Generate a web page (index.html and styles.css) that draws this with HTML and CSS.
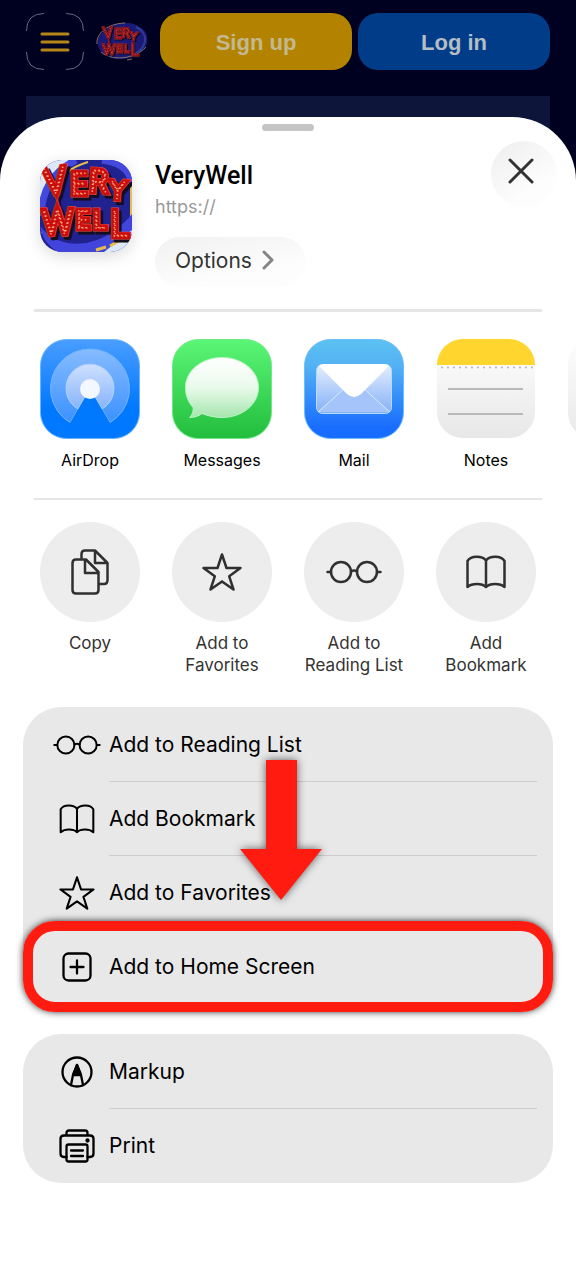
FILE: index.html
```html
<!doctype html>
<html lang="en">
<head>
<meta charset="UTF-8" />
<meta name="viewport" content="width=device-width, initial-scale=1" />
<title>VeryWell</title>
<link rel="stylesheet" href="styles.css">
</head>
<body>
	<!-- shared icons -->
	<svg class="defs" width="0" height="0" aria-hidden="true">
		<defs>
			<g id="letters" font-family="Inter, sans-serif" font-weight="100" text-anchor="middle">
				<text x="16" y="34" font-size="34" rotate="-6">V</text>
				<text x="39" y="34" font-size="28">E</text>
				<text x="58" y="31" font-size="29" rotate="3">R</text>
				<text x="77" y="38" font-size="23" rotate="4">Y</text>
				<text x="18" y="74" font-size="32" rotate="-2">W</text>
				<text x="43" y="68" font-size="23">E</text>
				<text x="60" y="68" font-size="23">L</text>
				<text x="80" y="76" font-size="34">L</text>
			</g>
			<g id="sign" stroke-linejoin="miter" fill="none">
				<use href="#letters" x="3" y="3" stroke="#130d20" stroke-width="7" />
				<use href="#letters" stroke="#e5523e" stroke-width="7" />
				<use href="#letters" stroke="#cb0c0c" stroke-width="6" />
				<use href="#letters" stroke="#ffb184" stroke-width="1.6" stroke-linecap="round" stroke-dasharray="0 4" />
			</g>
			<symbol id="glasses" viewBox="0 0 56 24">
				<circle cx="15" cy="12" r="10" />
				<circle cx="41" cy="12" r="10" />
				<path d="M25 11.500q3-1.800 6 0M1.500 12H5M51 12h3.500" />
			</symbol>
			<symbol id="book" viewBox="0 0 40 34">
				<path d="M20 5.500C16 .5 5 .5 1.500 6V32C6 28 16 28 20 32C24 28 34 28 38.500 32V6C35 .5 24 .5 20 5.500V32" />
			</symbol>
			<symbol id="star" viewBox="0 0 40 38">
				<path d="M20 1.500L24.500 15H38.500L27.200 23.300L31.500 36.500L20 28.400L8.500 36.500L12.800 23.300L1.500 15H15.500Z" />
			</symbol>
		</defs>
	</svg>

	<header class="topbar">
		<button class="menu" type="button" aria-label="Menu">
			<svg width="58" height="57" viewBox="0 0 58 57" fill="none">
				<path d="M.5 18Q.5.5 18 .5M40 .5Q57.500.5 57.500 18M57.500 39Q57.500 56.500 40 56.500M18 56.500Q.5 56.500.5 39" stroke="#66668a" />
				<path d="M16 21h26M16 29h26M16 37h26" stroke="#b58716" stroke-width="3" stroke-linecap="round" />
			</svg>
		</button>
		<a class="brand" href="#" aria-label="VeryWell">
			<svg width="52" height="40" viewBox="0 0 104 80">
				<ellipse cx="53" cy="38" rx="50" ry="36" fill="#23269a" transform="rotate(-9 53 38)" />
				<path d="M2 44C0 22 24 3 58 2M10 60C30 78 76 76 100 50M62 76l10-2" fill="none" stroke="#bda27f" stroke-width="2" />
				<path d="M80 10C108 24 102 52 74 66" fill="none" stroke="#4650c8" stroke-width="4" />
				<use href="#sign" transform="translate(12 4) scale(.82)" />
			</svg>
		</a>
		<a class="top-btn signup" href="#">Sign up</a>
		<a class="top-btn login" href="#">Log in</a>
	</header>

	<main class="stage">
		<section class="sheet">
			<div class="handle"></div>
			<div class="site">
				<svg class="site-icon" width="92" height="92" viewBox="0 0 92 92">
					<rect width="92" height="92" fill="#20228f" />
					<path d="M0 0H34C14 8 4 26 0 48Z" fill="#dce7f8" />
					<path d="M36 0C12 12 2 30 1 56M92 22C88 8 78 2 62 0" fill="none" stroke="#4448dc" stroke-width="7" />
					<path d="M48 2C28 8 18 18 12 30M91 26V66M2 72C20 92 62 96 92 64" fill="none" stroke="#e9bd4b" stroke-width="2" />
					<path d="M0 66C22 94 64 88 92 54V74L64 92H18C8 86 2 78 0 66Z" fill="#4145dc" />
					<path d="M64 92l28-22V92Z" fill="#dce7f8" />
					<path d="M56 90l10-3M70 86l14-8" stroke="#e9bd4b" stroke-width="3" />
					<use href="#sign" />
				</svg>
				<div class="site-text">
					<h1>VeryWell</h1>
					<p>https://</p>
					<button class="options" type="button">Options
						<svg width="12" height="20" viewBox="0 0 12 20"><path d="M2 2l8 8-8 8" /></svg>
					</button>
				</div>
				<button class="close" type="button" aria-label="Close">
					<svg width="26" height="26" viewBox="0 0 26 26"><path d="M2 2l22 22M24 2L2 24" /></svg>
				</button>
			</div>

			<nav class="apps">
				<a href="#">
					<svg width="100" height="100" viewBox="0 0 100 100">
						<defs>
							<linearGradient id="air" x2="0" y2="1"><stop stop-color="#4a9dff" /><stop offset=".7" stop-color="#0078ff" /></linearGradient>
							<linearGradient id="ring" x2="0" y2="1"><stop stop-color="#86bbff" /><stop offset="1" stop-color="#3b91ff" /></linearGradient>
							<linearGradient id="ring2" x2="0" y2="1"><stop stop-color="#cfe0ff" /><stop offset="1" stop-color="#85b4fb" /></linearGradient>
						</defs>
						<rect x=".5" y=".5" width="99" height="99" rx="26" fill="url(#air)" stroke="#68b5ff" />
						<path d="M30 83.500A39.500 39.500 0 1 1 70 83.500L50 50Z" fill="url(#ring)" stroke="#75b4ff" />
						<path d="M38 70A24 24 0 1 1 62 70L50 50Z" fill="url(#ring2)" stroke="#b5d3ff" />
						<path d="M50 50L29 86H71Z" fill="#0079ff" />
						<circle cx="50" cy="50" r="10" fill="#f3f7ff" />
					</svg>
					<span>AirDrop</span>
				</a>
				<a href="#">
					<svg width="100" height="100" viewBox="0 0 100 100">
						<defs>
							<linearGradient id="msg" x2="0" y2="1"><stop stop-color="#5bf675" /><stop offset="1" stop-color="#22bd3c" /></linearGradient>
							<linearGradient id="bubble" x2="0" y2="1"><stop stop-color="#fff" /><stop offset=".5" stop-color="#e9faeb" /><stop offset="1" stop-color="#a5e6ad" /></linearGradient>
						</defs>
						<rect x=".5" y=".5" width="99" height="99" rx="26" fill="url(#msg)" stroke="#70eb83" />
						<path d="M50 18.500C70 18.500 86.500 31.500 86.500 48.500S70 78.500 50 78.500C43 78.500 36 77 30 74.500C26 77.500 22 78.500 17.500 78.500C21 75 21.500 71 21 68.500C16 63 13.500 56 13.500 48.500C13.500 31.500 30 18.500 50 18.500Z" fill="url(#bubble)" stroke="#baf5c3" />
					</svg>
					<span>Messages</span>
				</a>
				<a href="#">
					<svg width="100" height="100" viewBox="0 0 100 100">
						<defs>
							<linearGradient id="mail" x2="0" y2="1"><stop stop-color="#5bc1f2" /><stop offset=".25" stop-color="#54b3f4" /><stop offset=".9" stop-color="#186cff" /></linearGradient>
							<linearGradient id="env" x2="0" y2="1"><stop stop-color="#e5eefe" /><stop offset="1" stop-color="#83b0f7" /></linearGradient>
						</defs>
						<rect x=".5" y=".5" width="99" height="99" rx="26" fill="url(#mail)" stroke="#6cbefa" />
						<rect x="12.500" y="25.500" width="75" height="49" rx="6" fill="url(#env)" stroke="#b5dcff" />
						<path d="M14 73L50 41L86 73" fill="#a5c5fa" stroke="#d9eaff" />
						<path d="M15 27Q17 25 20 25H80Q83 25 85 27L57 55Q50 61 43 55Z" fill="#fff" />
					</svg>
					<span>Mail</span>
				</a>
				<a href="#">
					<svg width="100" height="100" viewBox="0 0 100 100">
						<defs>
							<linearGradient id="paper" x2="0" y2="1"><stop stop-color="#fff" /><stop offset="1" stop-color="#e7e7e7" /></linearGradient>
							<clipPath id="tile"><rect x="1" y="0" width="98" height="99" rx="26" /></clipPath>
						</defs>
						<g clip-path="url(#tile)">
							<rect width="100" height="100" fill="url(#paper)" />
							<rect width="100" height="26" fill="#ffd52e" />
						</g>
						<path d="M6 28.500H97" stroke="#b5b3a8" stroke-width="2" stroke-linecap="round" stroke-dasharray="0 6" />
						<path d="M12 50H87M12 75H87" stroke="#b9b9b9" stroke-width="2" />
					</svg>
					<span>Notes</span>
				</a>
				<a class="more" href="#" aria-label="More apps"></a>
			</nav>

			<div class="actions">
				<button type="button">
					<span class="round"><svg width="38" height="46" viewBox="0 0 38 46"><path d="M10.500 9V5Q10.500 1.500 14 1.500H24L36.500 14V31Q36.500 35 33 35H28M24 1.500V14H36.500" /><path d="M5 10.500H15L27.500 23V41Q27.500 44.500 24 44.500H5Q1.500 44.500 1.500 41V14Q1.500 10.500 5 10.500ZM14 10.500V24H27.500" /></svg></span>
					Copy
				</button>
				<button type="button">
					<span class="round"><svg width="40" height="38"><use href="#star" /></svg></span>
					Add to<br>Favorites
				</button>
				<button type="button">
					<span class="round"><svg width="56" height="24"><use href="#glasses" /></svg></span>
					Add to<br>Reading List
				</button>
				<button type="button">
					<span class="round"><svg width="40" height="34"><use href="#book" /></svg></span>
					Add<br>Bookmark
				</button>
			</div>

			<div class="list">
				<button class="row" type="button"><span class="row-icon"><svg width="48" height="22"><use href="#glasses" /></svg></span><span class="row-label">Add to Reading List</span></button>
				<button class="row" type="button"><span class="row-icon"><svg width="36" height="30"><use href="#book" /></svg></span><span class="row-label">Add Bookmark</span></button>
				<button class="row plain" type="button"><span class="row-icon"><svg width="36" height="34"><use href="#star" /></svg></span><span class="row-label">Add to Favorites</span></button>
				<button class="row plain target" type="button"><span class="row-icon"><svg width="30" height="30" viewBox="0 0 30 30"><rect x="1.500" y="1.500" width="27" height="27" rx="5" /><path d="M8.500 15h13M15 8.500v13" /></svg></span><span class="row-label">Add to Home Screen</span></button>
				<svg class="arrow" width="82" height="140" viewBox="0 0 82 140" aria-hidden="true"><path d="M26 0H57V89H82L41 140L0 89H26Z" /></svg>
			</div>

			<div class="list">
				<button class="row" type="button"><span class="row-icon"><svg width="32" height="32" viewBox="0 0 32 32"><circle cx="16" cy="16" r="14.500" /><path d="M10 29L12 19H20L22 29M12 19L16 9L20 19" /><path class="solid" d="M16 9L12.500 18H19.500Z" /></svg></span><span class="row-label">Markup</span></button>
				<button class="row plain" type="button"><span class="row-icon"><svg width="36" height="34" viewBox="0 0 36 34"><path d="M7.500 28H5Q1.500 28 1.500 24.500V10Q1.500 6.500 5 6.500H31Q34.500 6.500 34.500 10V24.500Q34.500 28 31 28H28.500M7.500 6V4Q7.500 1.500 10 1.500H26Q28.500 1.500 28.500 4V6" /><rect x="7.500" y="15.500" width="21" height="17" rx="2" /><path d="M12 21.500h12M12 27h12" /><circle class="solid" cx="28.500" cy="11.500" r="1" /></svg></span><span class="row-label">Print</span></button>
			</div>
		</section>
	</main>
</body>
</html>
```
FILE: styles.css
```css
*{
	box-sizing:border-box;
}
html, body, h1, p, button{
	margin:0;
	padding:0;
}
body{
	display:flex;
	flex-direction:column;
	min-height:100vh;
	background:#000020;
	font-family:Inter, "Liberation Sans", sans-serif;
	color:#000;
}
button{
	border:0;
	background:none;
	color:inherit;
	font-family:inherit;
	cursor:pointer;
}
a{
	color:inherit;
	text-decoration:none;
}
svg{
	display:block;
}
.defs{
	position:absolute;
}

/* page behind the sheet */
.topbar{
	display:flex;
	align-items:center;
	padding:13px 26px 26px;
}
.brand{
	margin:0 12px;
	opacity:.7;
}
.top-btn{
	flex:1;
	height:57px;
	border-radius:20px;
	font:bold 22px/59px "Liberation Sans", sans-serif;
	text-align:center;
}
.signup{
	margin-right:6px;
	background:#b38300;
	color:#c3b88f;
}
.login{
	background:#003c87;
	color:#b3bdc6;
}
.stage{
	flex:1;
	display:flex;
	flex-direction:column;
	padding-top:21px;
	background:linear-gradient(#0d153b, #0d153b) top center / calc(100% - 52px) 120px no-repeat;
}

/* share sheet */
.sheet{
	flex:1;
	padding:7px 0 32px;
	border-radius:64px 64px 0 0;
	background:#fff;
	overflow:hidden;
}
.handle{
	width:52px;
	height:7px;
	margin:0 auto;
	border-radius:4px;
	background:#c5c5c5;
}
.site{
	display:flex;
	align-items:flex-start;
	margin:0 34px;
	padding:10px 0 22px 6px;
	border-bottom:3px solid #e6e6e6;
}
.site-icon{
	margin-top:19px;
	border-radius:22px;
	box-shadow:0 4px 16px rgba(0,0,0,.15);
}
.site-text{
	flex:1;
	margin:19px 0 0 23px;
}
h1{
	font-size:25px;
	font-weight:500;
	line-height:31px;
	font-family:Roboto, sans-serif;
}
.site-text p{
	margin-bottom:14px;
	color:#999;
	font-size:18px;
	line-height:32px;
}
.options{
	display:flex;
	align-items:center;
	gap:10px;
	height:50px;
	padding:0 32px 4px 20px;
	border-radius:25px;
	background:linear-gradient(170deg, #f1f1f1, #fdfdfd 70%);
	color:#333;
	font-size:21px;
}
.options svg{
	fill:none;
	stroke:#858585;
	stroke-width:3;
	stroke-linecap:round;
	stroke-linejoin:round;
}
.close{
	width:66px;
	height:66px;
	margin-right:-15px;
	padding:0 0 6px 17px;
	border-radius:50%;
	background:linear-gradient(145deg, #eee, #fdfdfd 70%);
}
.close svg{
	fill:none;
	stroke:#333;
	stroke-width:3;
	stroke-linecap:round;
}
.apps{
	display:flex;
	gap:32px;
	margin-left:34px;
	padding:27px 0 29px 6px;
	overflow:hidden;
	background:linear-gradient(#e6e6e6, #e6e6e6) bottom left / calc(100% - 34px) 2px no-repeat;
	font-size:16px;
	line-height:22px;
	text-align:center;
}
.apps a{
	flex:0 0 100px;
}
.apps span{
	display:block;
	margin-top:10px;
}
.apps .more{
	height:100px;
	border-radius:26px;
	background:linear-gradient(#fdfdfd, #e9e9e9);
}
.actions{
	display:flex;
	justify-content:space-between;
	align-items:flex-start;
	padding:22px 40px 31px;
}
.actions button{
	display:flex;
	flex-direction:column;
	align-items:center;
	width:100px;
	color:#333;
	font-size:17px;
	line-height:22px;
	white-space:nowrap;
}
.round{
	display:grid;
	place-items:center;
	width:100px;
	height:100px;
	margin-bottom:10px;
	border-radius:50%;
	background:#ededed;
}
.round svg, .row-icon svg{
	fill:none;
	stroke:#303030;
	stroke-width:2.5;
	stroke-linecap:round;
	stroke-linejoin:round;
}

/* action lists */
.list{
	position:relative;
	margin:0 23px 30px;
	padding-top:1px;
	border-radius:38px;
	background:#e8e8e8;
}
.row{
	position:relative;
	display:flex;
	align-items:center;
	gap:8px;
	width:100%;
	height:74px;
	padding:0 16px 0 30px;
	font-size:21px;
	text-align:left;
}
.row-icon{
	display:grid;
	place-items:center;
	width:48px;
}
.row-icon svg{
	stroke:#000;
	stroke-width:2.3;
}
.row-icon .solid{
	fill:#000;
}
.row-label{
	flex:1;
	border-bottom:1px solid #ccc;
	line-height:73px;
}
.plain .row-label{
	border-color:transparent;
}
.target::after{
	content:"";
	position:absolute;
	inset:-9px 0 -8px;
	border:10px solid #ff1b0f;
	border-radius:32px;
	box-shadow:0 0 7px rgba(0,0,0,.8);
}
.target{
	z-index:1;
}
.arrow{
	position:absolute;
	top:53px;
	left:41%;
	z-index:2;
	fill:#ff1b0f;
	filter:drop-shadow(0 0 4px rgba(0,0,0,.6));
}
```
